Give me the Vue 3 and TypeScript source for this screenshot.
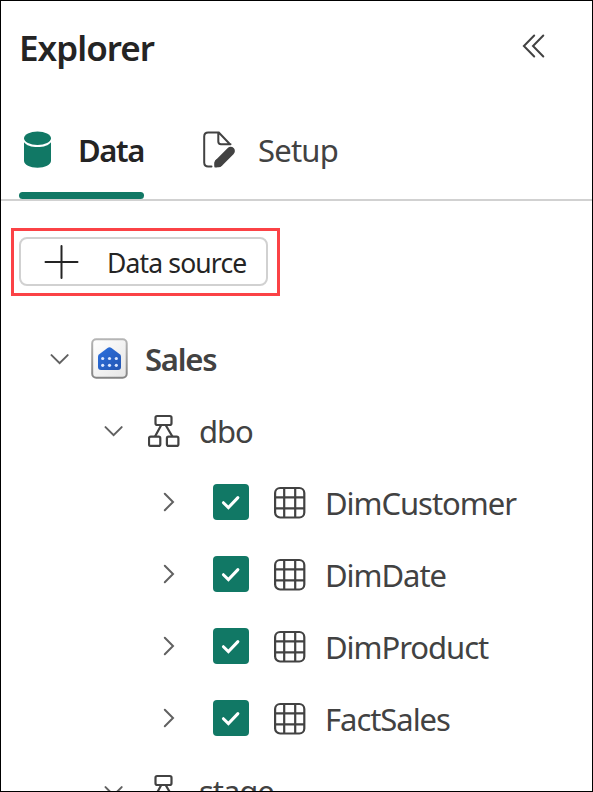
<script setup lang="ts">
interface TreeNode {
  id: string
  label: string
  kind: 'warehouse' | 'schema' | 'table'
}

const nodes: TreeNode[] = [
  { id: 'sales', label: 'Sales', kind: 'warehouse' },
  { id: 'dbo', label: 'dbo', kind: 'schema' },
  { id: 'customer', label: 'DimCustomer', kind: 'table' },
  { id: 'date', label: 'DimDate', kind: 'table' },
  { id: 'product', label: 'DimProduct', kind: 'table' },
  { id: 'fact', label: 'FactSales', kind: 'table' },
  { id: 'stage', label: 'stage', kind: 'schema' },
]
</script>

<template>
  <main class="explorer">
    <header class="header">
      <h1 class="title">Explorer</h1>
      <svg class="collapse" width="24" height="24" viewBox="0 0 24 24">
        <path d="M12.200 1.500 1.900 12l10.300 10.500M21.300 1.500 11 12l10.300 10.500" />
      </svg>
    </header>

    <nav class="tabs">
      <div class="tab active">
        <svg width="28" height="37" viewBox="0 0 28 37">
          <ellipse cx="13.500" cy="7.200" rx="13.500" ry="6.700" />
          <path d="M0 11.200c2.200 3.100 7.300 4.900 13.500 4.900s11.300-1.800 13.500-4.900v18.500c0 4-6 7-13.500 7S0 33.700 0 29.700z" />
        </svg>
        <span class="tab-label data">Data</span>
      </div>
      <div class="tab">
        <svg class="setup-icon" width="34" height="37" viewBox="0 0 34 37">
          <path class="line" d="M9.500 35.500H6.200Q2.200 35.500 2.200 31.500V5.500Q2.200 1.500 6.200 1.500h10.600L28 13.200M16.300 2v8.500q0 2.700 2.700 2.700h9.500" />
          <path class="pen" d="M16.700 32 28.700 20" />
          <path class="tip" d="M12.400 36.200q-.8-5.200 1.900-7.900l6 6q-3 2.700-7.900 1.900z" />
        </svg>
        <span class="tab-label setup">Setup</span>
      </div>
    </nav>

    <div class="callout">
      <button class="add">
        <svg width="35" height="34" viewBox="0 0 35 34"><path d="M17.500 1v32M1.500 17h32" /></svg>
        <span>Data source</span>
      </button>
    </div>

    <div class="tree">
      <div v-for="node in nodes" :key="node.id" class="row" :class="node.kind">
        <svg v-if="node.kind === 'table'" class="chevron" width="20" height="20" viewBox="0 0 20 20">
          <path d="M5.800 1.800 14 10l-8.200 8.200" />
        </svg>
        <svg v-else class="chevron" width="20" height="20" viewBox="0 0 20 20">
          <path d="M1.500 7.100 9.600 15.200l8.100-8.100" />
        </svg>

        <svg v-if="node.kind === 'table'" class="check" width="36" height="36" viewBox="0 0 36 36">
          <rect width="36" height="36" rx="4" />
          <path d="M10.400 18.700l5 4.900L24.900 13.600" />
        </svg>

        <svg v-if="node.kind === 'warehouse'" class="warehouse-icon" width="38" height="42" viewBox="0 0 38 42">
          <defs>
            <linearGradient id="frame" x1="0" y1="0" x2="0" y2="1">
              <stop offset="0" stop-color="#b5b5b5" />
              <stop offset="1" stop-color="#858585" />
            </linearGradient>
            <linearGradient id="paper" x1="0" y1="0" x2="1" y2="1">
              <stop offset="0" stop-color="#ffffff" />
              <stop offset="1" stop-color="#e6e6e6" />
            </linearGradient>
            <linearGradient id="house" x1="0" y1="0" x2="1" y2="1">
              <stop offset="0" stop-color="#2b70df" />
              <stop offset="1" stop-color="#2456b2" />
            </linearGradient>
          </defs>
          <rect x="2.200" y="2.200" width="34.500" height="38.500" rx="4" fill="url(#paper)" stroke="url(#frame)" stroke-width="2" />
          <path d="M8 19.600q0-1.200.9-2l8.600-6.700q2-1.500 4 0l8.600 6.700q.9.800.9 2V30q0 3-3 3H11q-3 0-3-3z" fill="url(#house)" />
          <g fill="#dce8ff">
            <circle cx="12.700" cy="21.500" r="1.600" /><circle cx="19.500" cy="21.500" r="1.600" /><circle cx="26.300" cy="21.500" r="1.600" />
            <circle cx="12.700" cy="28.300" r="1.600" /><circle cx="19.500" cy="28.300" r="1.600" /><circle cx="26.300" cy="28.300" r="1.600" />
          </g>
        </svg>
        <svg v-else-if="node.kind === 'schema'" class="glyph" width="32" height="33" viewBox="0 0 32 33">
          <rect x="7.500" y="2" width="16" height="9" rx="1.700" />
          <rect x="1" y="22.700" width="11.300" height="9.200" rx="1.700" />
          <rect x="18.900" y="22.700" width="11.500" height="9.200" rx="1.700" />
          <path d="M13 11.500 7 22.500M17.900 11.500l6.500 11" />
        </svg>
        <svg v-else class="glyph" width="32" height="33" viewBox="0 0 32 33">
          <rect x="1.100" y="2" width="29.200" height="29.500" rx="5" />
          <path d="M10.200 2v29.500M21.200 2v29.500M1.100 11.300h29.200M1.100 22.400h29.200" />
        </svg>

        <span class="name" :class="node.id">{{ node.label }}</span>
      </div>
    </div>
  </main>
</template>

<style>
body {
  margin: 0;
  background: #fff;
}
</style>

<style scoped>
.explorer {
  box-sizing: border-box;
  width: 593px;
  height: 792px;
  overflow: hidden;
  border: 1px solid #000;
  background: #fff;
  color: #424242;
  font-family: "Noto Sans", "Open Sans", sans-serif;
}

svg {
  display: block;
  flex: none;
  fill: none;
}

.header {
  display: flex;
  align-items: center;
  justify-content: space-between;
  height: 90px;
  padding: 0 46px 0 18px;
}

.title {
  margin: 3px 0 0;
  color: #242424;
  font-size: 35px;
  font-weight: 600;
  letter-spacing: -0.95px;
  line-height: 48px;
}

.collapse {
  stroke: #424242;
  stroke-width: 2;
  stroke-linecap: round;
}

.tabs {
  display: flex;
  gap: 57px;
  box-sizing: border-box;
  height: 110px;
  padding-left: 18px;
  border-bottom: 2px solid #d1d1d1;
}

.tab {
  display: flex;
  align-items: center;
  box-sizing: border-box;
  padding: 9px 0 0;
  font-size: 31px;
  line-height: 44px;
}

.tab.active {
  position: relative;
  width: 125px;
  padding-left: 5px;
  color: #242424;
  font-weight: 600;
}

.tab.active::after {
  content: "";
  position: absolute;
  bottom: 0;
  left: 0;
  width: 125px;
  height: 7px;
  border-radius: 4px;
  background: #117865;
}

.tab.active svg {
  fill: #117865;
}

.tab-label {
  white-space: nowrap;
}

.data {
  margin-left: 26px;
  letter-spacing: -1.4px;
}

.setup {
  margin-left: 22px;
  letter-spacing: -0.8px;
}

.setup-icon {
  margin-left: 1px;
}

.setup-icon .line {
  stroke: #424242;
  stroke-width: 2;
  stroke-linecap: round;
}

.setup-icon .pen {
  stroke: #424242;
  stroke-width: 8.4;
  stroke-linecap: round;
}

.setup-icon .tip {
  fill: #424242;
}

.callout {
  box-sizing: border-box;
  width: 269px;
  height: 68px;
  margin: 27px 0 0 10px;
  padding: 6px 5px;
  border: 3px solid #fb4246;
}

.add {
  display: flex;
  align-items: center;
  gap: 28px;
  box-sizing: border-box;
  width: 249px;
  height: 49px;
  padding: 0 0 0 23px;
  border: 2px solid #d1d1d1;
  border-radius: 8px;
  background: #fff;
  color: #242424;
  font-family: inherit;
  font-size: 26.5px;
  letter-spacing: -0.85px;
  line-height: 40px;
  white-space: nowrap;
}

.add svg {
  stroke: #242424;
  stroke-width: 2;
  stroke-linecap: round;
}

.add span {
  margin-top: 3px;
}

.tree {
  padding-top: 26px;
}

.row {
  display: flex;
  align-items: center;
  height: 72px;
  font-size: 31px;
  line-height: 44px;
}

.warehouse {
  padding-left: 49px;
  font-weight: 600;
}

.schema {
  padding-left: 103px;
}

.table {
  padding-left: 158px;
}

.chevron {
  stroke: #616161;
  stroke-width: 2;
  stroke-linecap: round;
}

.warehouse-icon {
  margin-left: 20px;
}

.schema .glyph {
  margin-left: 24px;
}

.table .glyph {
  margin-left: 25px;
}

.glyph {
  stroke: #424242;
  stroke-width: 2.2;
}

.check {
  margin-left: 34px;
}

.check rect {
  fill: #117865;
}

.check path {
  stroke: #fff;
  stroke-width: 3;
  stroke-linecap: round;
}

.name {
  margin: 2px 0 0 19px;
  letter-spacing: -1.05px;
  white-space: nowrap;
}

.warehouse .name {
  margin-left: 17px;
  letter-spacing: -1.2px;
}
</style>
